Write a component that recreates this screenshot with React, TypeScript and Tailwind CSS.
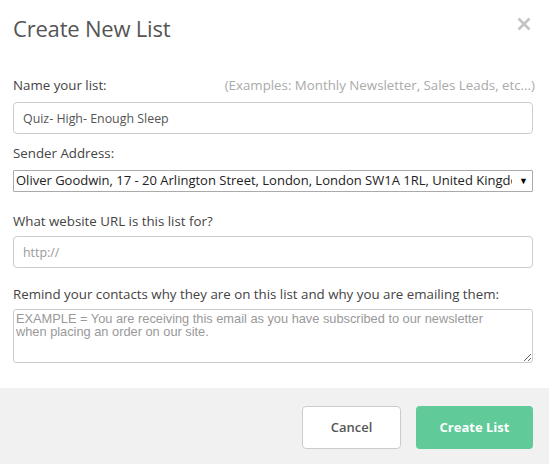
import React from "react";

export default function App() {
  return (
    <div className="w-[549px] h-[464px] bg-white flex flex-col font-['Open_Sans',sans-serif] text-[#555]">
      <div className="flex items-start justify-between pl-[13px] pr-[16px] pt-[13px] h-[70px]">
        <h1 className="text-[22px] leading-[30px] text-[#555] tracking-[-0.2px]">Create New List</h1>
        <svg width="14" height="14" viewBox="0 0 14 14" className="mt-[4px] mr-[2px]">
          <path d="M1.5 1.5 L12.5 12.5 M12.5 1.5 L1.5 12.5" stroke="#c4c4c4" strokeWidth="2.6" strokeLinecap="butt" />
        </svg>
      </div>
      <div className="flex flex-col pl-[13px] pr-[16px] flex-1">
        <div className="flex justify-between items-center h-[18px] mt-[7px]">
          <span className="text-[13.3px] text-[#444]">Name your list:</span>
          <span className="text-[13.3px] text-[#aaa] mr-[-2px]">(Examples: Monthly Newsletter, Sales Leads, etc...)</span>
        </div>
        <input
          defaultValue="Quiz- High- Enough Sleep"
          className="mt-[7px] h-[32px] w-full border border-[#ccc] rounded-[4px] px-[9px] text-[12.4px] text-[#555] outline-none"
        />
        <span className="mt-[10px] text-[13.3px] leading-[18px] text-[#444]">Sender Address:</span>
        <div className="mt-[8px] h-[22px] w-full border border-[#aaa] flex items-center justify-between pl-[2px] pr-[4px] rounded-[1px]">
          <span className="text-[13px] text-[#222] whitespace-nowrap overflow-hidden w-[496px]">
            Oliver Goodwin, 17 - 20 Arlington Street, London, London SW1A 1RL, United Kingdom
          </span>
          <span className="text-[9px] text-black">▼</span>
        </div>
        <span className="mt-[20px] text-[13.3px] leading-[18px] text-[#444]">What website URL is this list for?</span>
        <input
          placeholder="http://"
          className="mt-[6px] h-[32px] w-full border border-[#ccc] rounded-[4px] px-[9px] text-[12.4px] text-[#555] placeholder:text-[#999] outline-none"
        />
        <span className="mt-[17px] text-[13.3px] leading-[18px] text-[#444]">
          Remind your contacts why they are on this list and why you are emailing them:
        </span>
        <textarea
          placeholder={"EXAMPLE = You are receiving this email as you have subscribed to our newsletter\nwhen placing an order on our site."}
          className="mt-[6px] h-[54px] w-full border border-[#ccc] rounded-[3px] px-[2px] py-[2px] font-['Liberation_Sans',sans-serif] text-[12.8px] leading-[13px] text-[#555] placeholder:text-[#999] outline-none"
        />
      </div>
      <div className="h-[76px] bg-[#f1f1f1] flex items-start justify-end gap-[15px] pt-[18px] pr-[16px]">
        <button className="w-[99px] h-[43px] bg-white border border-[#ccc] rounded-[4px] text-[13px] font-semibold text-[#555]">
          Cancel
        </button>
        <button className="w-[117px] h-[43px] bg-[#60ca98] rounded-[4px] text-[13px] font-bold text-white">
          Create List
        </button>
      </div>
    </div>
  );
}
